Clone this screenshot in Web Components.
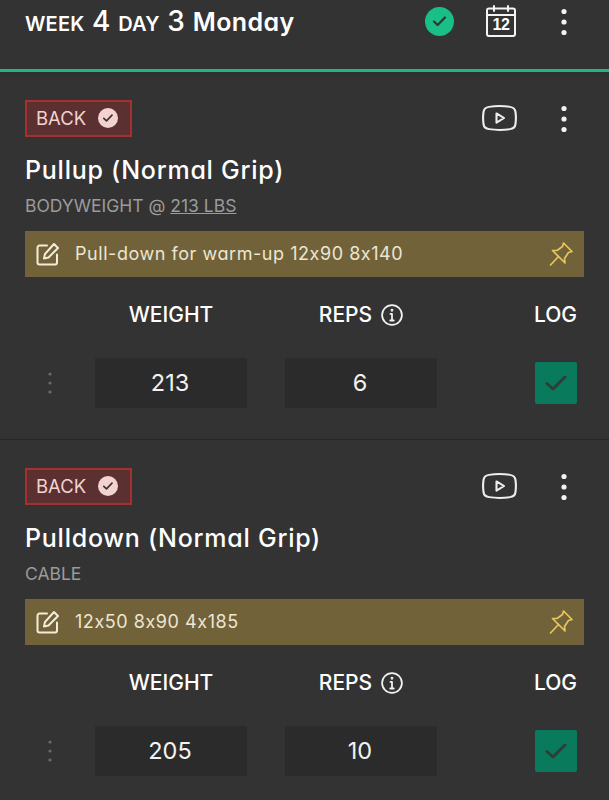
<!DOCTYPE html>
<html lang="en">
<head>
<meta charset="utf-8">
<title>Workout</title>
<style>
    html, body { margin: 0; height: 800px; overflow: hidden; background: #333333; }
    body { font-family: Inter, "Open Sans", sans-serif; font-feature-settings: "cv11", "calt" 0; color: #fff; }
</style>
</head>
<body>
<week-header week="4" day="3" name="Monday"></week-header>

<exercise-card muscle="BACK" name="Pullup (Normal Grip)" weight="213" reps="6">
    <span slot="kind">BODYWEIGHT @ <u>213 LBS</u></span>
    <span slot="note">Pull-down for warm-up 12x90 8x140</span>
</exercise-card>

<exercise-card muscle="BACK" name="Pulldown (Normal Grip)" weight="205" reps="10">
    <span slot="kind">CABLE</span>
    <span slot="note">12x50 8x90 4x185</span>
</exercise-card>

<script>
// iconos compartidos
const DOTS = `<svg width="8" height="30" viewBox="0 0 8 30"><circle cx="4" cy="4.5" r="2.6"/><circle cx="4" cy="15" r="2.6"/><circle cx="4" cy="25.5" r="2.6"/></svg>`;

class WeekHeader extends HTMLElement {
    constructor() {
        super();
        this.attachShadow({ mode: 'open' });
    }

    connectedCallback() {
        const week = this.getAttribute('week');
        const day = this.getAttribute('day');
        const name = this.getAttribute('name');
        this.shadowRoot.innerHTML = `
            <style>
                :host { display: block; height: 69px; border-bottom: 3px solid #1fb684; box-shadow: 0 3px 6px rgba(0, 0, 0, 0.08); }
                .bar { display: flex; align-items: center; height: 42px; padding: 0 41px 0 25px; }
                h1 { flex: 1; margin: 0; font-size: 25px; font-weight: 600; letter-spacing: 0.4px; display: flex; align-items: baseline; white-space: nowrap; }
                .sm { font-size: 20px; letter-spacing: 0.2px; }
                .num { font-size: 28px; font-weight: 500; margin: 0 7.5px; }
                .done { width: 29px; height: 29px; border-radius: 50%; background: #1abf88; display: flex; align-items: center; justify-content: center; }
                .cal { margin-left: 32px; position: relative; width: 30px; height: 32px; }
                .cal span { position: absolute; left: 0; right: 0; top: 11px; text-align: center; font: 700 16px/18px "Liberation Sans", sans-serif; letter-spacing: -0.5px; color: #fff; }
                .more { margin: 2px 0 0 44px; width: 8px; height: 30px; fill: #f2f2f2; }
            </style>
            <div class="bar">
                <h1><span class="sm">WEEK</span><span class="num">${week}</span><span class="sm">DAY</span><span class="num">${day}</span><span>${name}</span></h1>
                <div class="done">
                    <svg width="17" height="14" viewBox="0 0 17 14" fill="none" stroke="#2c3a35" stroke-width="2.4" stroke-linecap="round" stroke-linejoin="round"><path d="M3 7.5 6.6 11 14 3.5"/></svg>
                </div>
                <div class="cal">
                    <svg width="30" height="32" viewBox="0 0 30 32" fill="none" stroke="#f4f4f4" stroke-width="2" stroke-linecap="round" stroke-linejoin="round"><rect x="1" y="3.5" width="28" height="27.5" rx="2"/><path d="M1 10H29M8 1V6M22 1V6"/></svg>
                    <span>12</span>
                </div>
                <div class="more">${DOTS}</div>
            </div>
        `;
    }
}

class ExerciseCard extends HTMLElement {
    constructor() {
        super();
        this.attachShadow({ mode: 'open' });
    }

    connectedCallback() {
        const muscle = this.getAttribute('muscle');
        const name = this.getAttribute('name');
        const weight = this.getAttribute('weight');
        const reps = this.getAttribute('reps');
        this.shadowRoot.innerHTML = `
            <style>
                :host { display: block; height: 339px; padding: 28px 25px 0; border-bottom: 1px solid #262626; }
                .top { display: flex; align-items: center; height: 37px; }
                .badge { box-sizing: border-box; width: 107px; height: 37px; display: flex; align-items: center; gap: 12px; padding: 0 0 2px 9px; border: 2px solid #a5302f; background: #5a3130; color: #f3d3d1; font-size: 18.5px; }
                .badge .tick { width: 20px; height: 20px; border-radius: 50%; background: #f3d3d1; display: flex; align-items: center; justify-content: center; }
                .play { margin: 0 0 2px auto; display: flex; }
                .more { margin: 0 16px 0 43px; fill: #f2f2f2; display: flex; }
                h2 { margin: 17px 0 0; font-size: 25px; line-height: 32px; font-weight: 500; letter-spacing: 0.75px; white-space: nowrap; }
                .kind { margin-top: 9px; height: 22px; font-size: 17.5px; line-height: 22px; color: #9b9b9b; white-space: nowrap; }
                .note { margin-top: 14px; height: 46px; display: flex; align-items: center; background: #72623a; color: #ece6d3; font-size: 18px; letter-spacing: 0.55px; padding: 0 11px; }
                .note .txt { flex: 1; margin: 0 0 2px 15px; white-space: nowrap; }
                .sets { display: grid; grid-template-columns: 32px 152px 152px 1fr; column-gap: 38px; align-items: center; }
                .head { margin-top: 26px; height: 24px; font-size: 21px; font-weight: 500; line-height: 24px; }
                .head .c { display: flex; align-items: center; justify-content: center; gap: 9px; }
                .head .log { justify-self: end; margin-right: 7px; }
                .row { margin-top: 31px; height: 50px; }
                .grip { justify-self: center; margin-left: 18px; display: flex; fill: #6b6b6b; }
                .val { box-sizing: border-box; height: 50px; padding: 0 2px 2px 0; background: #2b2b2b; display: flex; align-items: center; justify-content: center; font-size: 23.5px; color: #f2f2f2; }
                .check { justify-self: end; margin-right: 7px; width: 42px; height: 42px; border-radius: 2px; background: #097b5c; display: flex; align-items: center; justify-content: center; }
            </style>
            <div class="top">
                <div class="badge">${muscle}
                    <span class="tick"><svg width="12" height="10" viewBox="0 0 12 10" fill="none" stroke="#3d3331" stroke-width="1.7" stroke-linecap="round" stroke-linejoin="round"><path d="M1.8 5.3 4.5 7.8 10 2.2"/></svg></span>
                </div>
                <div class="play">
                    <svg width="35" height="26" viewBox="0 0 35 28" preserveAspectRatio="none" fill="none" stroke="#ededed" stroke-width="2.1" stroke-linejoin="round"><path d="M7 2C13 1 22 1 28 2 31 2.5 33 4 33.4 7 34 11 34 17 33.4 21 33 24 31 25.5 28 26 22 27 13 27 7 26 4 25.5 2 24 1.6 21 1 17 1 11 1.6 7 2 4 4 2.5 7 2Z"/><path d="M14.5 9 22 14 14.5 19Z"/></svg>
                </div>
                <div class="more">${DOTS}</div>
            </div>
            <h2>${name}</h2>
            <div class="kind"><slot name="kind"></slot></div>
            <div class="note">
                <svg width="24" height="24" viewBox="0 0 24 24" fill="none" stroke="#f2ecd8" stroke-width="2" stroke-linecap="round" stroke-linejoin="round"><path d="M11 3.5H3.5A2 2 0 0 0 1.5 5.5V20.5A2 2 0 0 0 3.5 22.5H19A2 2 0 0 0 21 20.5V12.5"/><path d="M18 2 22 6 12.5 15.5 8 16.5 9 12Z"/></svg>
                <span class="txt"><slot name="note"></slot></span>
                <svg width="24" height="24" viewBox="0 0 24 24" fill="none" stroke="#e6c65c" stroke-width="1.7" stroke-linecap="round" stroke-linejoin="round"><path d="M14.5 1 23 9.5 19.5 10.5 15.5 16.5 16 21 3.5 8.5 8 8.5 13.5 4.5Z"/><path d="M9.5 14.5 1.5 23"/></svg>
            </div>
            <div class="sets head">
                <span></span>
                <span class="c">WEIGHT</span>
                <span class="c">REPS
                    <svg width="22" height="22" viewBox="0 0 20 20" fill="none" stroke="#f2f2f2" stroke-width="1.6" stroke-linecap="round"><circle cx="10" cy="10" r="9"/><path d="M10 9V15M8.6 9H10M8.4 15H11.6"/><circle cx="10" cy="5.7" r="0.5"/></svg>
                </span>
                <span class="log">LOG</span>
            </div>
            <div class="sets row">
                <div class="grip"><svg width="4" height="22" viewBox="0 0 4 22"><circle cx="2" cy="2" r="1.6"/><circle cx="2" cy="11" r="1.6"/><circle cx="2" cy="20" r="1.6"/></svg></div>
                <div class="val">${weight}</div>
                <div class="val">${reps}</div>
                <div class="check"><svg width="22" height="18" viewBox="0 0 22 18" fill="none" stroke="#2f3d38" stroke-width="3" stroke-linecap="round" stroke-linejoin="round"><path d="M2 9.5 8 15 20 3"/></svg></div>
            </div>
        `;
    }
}

customElements.define('week-header', WeekHeader);
customElements.define('exercise-card', ExerciseCard);
</script>
</body>
</html>
